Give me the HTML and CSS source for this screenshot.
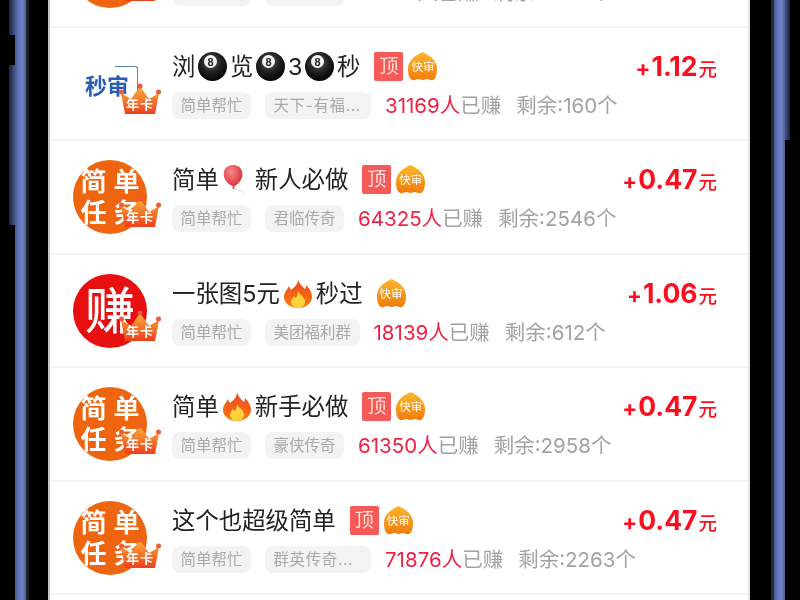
FILE: index.html
```html
<!DOCTYPE html>
<html>
<head>
    <meta charset="UTF-8">
    <title>任务列表</title>
    <link rel="stylesheet" href="styles.css">
</head>
<body>
<svg class="defs" width="0" height="0">
    <defs>
        <linearGradient id="peachFill" x1="0" y1="0" x2="0" y2="1">
            <stop offset="0" stop-color="#fdb62c"/>
            <stop offset="1" stop-color="#ef7d0c"/>
        </linearGradient>
        <linearGradient id="crownFill" x1="0" y1="0" x2="0" y2="1">
            <stop offset="0" stop-color="#fbb03a"/>
            <stop offset="1" stop-color="#ee3f1c"/>
        </linearGradient>
        <radialGradient id="ballFill" cx=".45" cy=".35" r=".7">
            <stop offset="0" stop-color="#5a5a5a"/>
            <stop offset=".55" stop-color="#1c1c1c"/>
            <stop offset="1" stop-color="#000"/>
        </radialGradient>
        <radialGradient id="balloonFill" cx=".4" cy=".3" r=".75">
            <stop offset="0" stop-color="#f98a8a"/>
            <stop offset="1" stop-color="#d9202c"/>
        </radialGradient>
        <linearGradient id="fireFill" x1="0" y1="0" x2="0" y2="1">
            <stop offset="0" stop-color="#f0451c"/>
            <stop offset="1" stop-color="#f77f12"/>
        </linearGradient>
        <symbol id="peach" viewBox="0 0 29 29">
            <path d="M14.500 0C8 3 0 8 0 17c0 5 1 9 4 11 2 1 4-1 6-1 2 0 3 1 4.500 1s3-1 4.500-1c2 0 4 2 6 1 3-2 4-6 4-11C29 8 21 3 14.500 0z" fill="url(#peachFill)"/>
        </symbol>
        <symbol id="crown" viewBox="0 0 42 32">
            <path d="M6 31L2 10l10 6L21 3l9 13 10-6-4 21z" fill="url(#crownFill)"/>
            <circle cx="2.500" cy="9" r="2.500" fill="#ee5a3a"/>
            <circle cx="21" cy="3" r="2.500" fill="#ee5a3a"/>
            <circle cx="39.500" cy="9" r="2.500" fill="#ee5a3a"/>
        </symbol>
        <symbol id="ball" viewBox="0 0 29 29">
            <circle cx="14.500" cy="14.500" r="14.500" fill="url(#ballFill)"/>
            <circle cx="12.500" cy="9.500" r="6.500" fill="#f4f4f4"/>
            <text x="12.500" y="13.500" font-size="11" font-family="Liberation Sans" font-weight="bold" text-anchor="middle" fill="#222">8</text>
        </symbol>
        <symbol id="balloon" viewBox="0 0 25 31">
            <path d="M11 0c6 0 10 4 10 10 0 6-5 11-9 13l1 2-3 0 1-2C6 21 1 16 1 10 1 4 5 0 11 0z" fill="url(#balloonFill)"/>
            <path d="M12 25c3 1 7 3 11 6" fill="none" stroke="#ddd" stroke-width="1"/>
        </symbol>
        <symbol id="fire" viewBox="0 0 28 29">
            <path d="M14 0c1 5 4 7 7 10 1-1 1-3 1-4 4 4 6 8 6 12 0 6-6 11-14 11S0 24 0 18c0-5 3-7 5-11 1 2 1 3 2 4 4-3 7-6 7-11z" fill="url(#fireFill)"/>
            <path d="M14 12c1 3 7 6 7 11 0 3-3 6-7 6s-7-3-7-6c0-3 2-4 3-6 1 1 1 2 2 2 1-2 2-4 2-7z" fill="#fdd23a"/>
        </symbol>
    </defs>
</svg>

<div class="phone">
    <div class="rail rail-left">
        <div class="keys">
            <i class="key key-top"></i>
            <i class="key key-main"></i>
        </div>
        <i class="strip"></i>
    </div>

    <ul class="list">
        <li class="row">
            <div class="avatar avatar-orange">
                <span class="word">简</span><span class="word">单</span><span class="word">任</span><span class="word">务</span>
                <div class="crown"><svg><use href="#crown"/></svg><span>年卡</span></div>
            </div>
            <div class="info">
                <div class="title-row">
                    <span class="title">简单任务</span>
                    <span class="price"><em>+</em>0.47<small>元</small></span>
                </div>
                <div class="meta">
                    <span class="tag">简单帮忙</span>
                    <span class="tag">豪侠传奇</span>
                    <span class="stat"><b>61350人</b>已赚</span>
                    <span class="stat">剩余:2958个</span>
                </div>
            </div>
        </li>

        <li class="row">
            <div class="avatar avatar-logo">
                <i class="logo-frame"></i>
                <span class="logo-text">秒审</span>
                <div class="crown"><svg><use href="#crown"/></svg><span>年卡</span></div>
            </div>
            <div class="info">
                <div class="title-row">
                    <span class="title">浏<svg class="emoji ball"><use href="#ball"/></svg>览<svg class="emoji ball"><use href="#ball"/></svg>3<svg class="emoji ball"><use href="#ball"/></svg>秒</span>
                    <span class="top-badge">顶</span>
                    <span class="fast"><svg><use href="#peach"/></svg><span>快审</span></span>
                    <span class="price"><em>+</em>1.12<small>元</small></span>
                </div>
                <div class="meta">
                    <span class="tag">简单帮忙</span>
                    <span class="tag tag-cut">天下-有福...</span>
                    <span class="stat"><b>31169人</b>已赚</span>
                    <span class="stat">剩余:160个</span>
                </div>
            </div>
        </li>

        <li class="row">
            <div class="avatar avatar-orange">
                <span class="word">简</span><span class="word">单</span><span class="word">任</span><span class="word">务</span>
                <div class="crown"><svg><use href="#crown"/></svg><span>年卡</span></div>
            </div>
            <div class="info">
                <div class="title-row">
                    <span class="title">简单<svg class="emoji balloon"><use href="#balloon"/></svg>新人必做</span>
                    <span class="top-badge">顶</span>
                    <span class="fast"><svg><use href="#peach"/></svg><span>快审</span></span>
                    <span class="price"><em>+</em>0.47<small>元</small></span>
                </div>
                <div class="meta">
                    <span class="tag">简单帮忙</span>
                    <span class="tag">君临传奇</span>
                    <span class="stat"><b>64325人</b>已赚</span>
                    <span class="stat">剩余:2546个</span>
                </div>
            </div>
        </li>

        <li class="row">
            <div class="avatar avatar-red">
                <span class="big-word">赚</span>
                <div class="crown"><svg><use href="#crown"/></svg><span>年卡</span></div>
            </div>
            <div class="info">
                <div class="title-row">
                    <span class="title">一张图5元<svg class="emoji fire"><use href="#fire"/></svg>秒过</span>
                    <span class="fast"><svg><use href="#peach"/></svg><span>快审</span></span>
                    <span class="price"><em>+</em>1.06<small>元</small></span>
                </div>
                <div class="meta">
                    <span class="tag">简单帮忙</span>
                    <span class="tag">美团福利群</span>
                    <span class="stat"><b>18139人</b>已赚</span>
                    <span class="stat">剩余:612个</span>
                </div>
            </div>
        </li>

        <li class="row">
            <div class="avatar avatar-orange">
                <span class="word">简</span><span class="word">单</span><span class="word">任</span><span class="word">务</span>
                <div class="crown"><svg><use href="#crown"/></svg><span>年卡</span></div>
            </div>
            <div class="info">
                <div class="title-row">
                    <span class="title">简单<svg class="emoji fire"><use href="#fire"/></svg>新手必做</span>
                    <span class="top-badge">顶</span>
                    <span class="fast"><svg><use href="#peach"/></svg><span>快审</span></span>
                    <span class="price"><em>+</em>0.47<small>元</small></span>
                </div>
                <div class="meta">
                    <span class="tag">简单帮忙</span>
                    <span class="tag">豪侠传奇</span>
                    <span class="stat"><b>61350人</b>已赚</span>
                    <span class="stat">剩余:2958个</span>
                </div>
            </div>
        </li>

        <li class="row">
            <div class="avatar avatar-orange">
                <span class="word">简</span><span class="word">单</span><span class="word">任</span><span class="word">务</span>
                <div class="crown"><svg><use href="#crown"/></svg><span>年卡</span></div>
            </div>
            <div class="info">
                <div class="title-row">
                    <span class="title">这个也超级简单</span>
                    <span class="top-badge">顶</span>
                    <span class="fast"><svg><use href="#peach"/></svg><span>快审</span></span>
                    <span class="price"><em>+</em>0.47<small>元</small></span>
                </div>
                <div class="meta">
                    <span class="tag">简单帮忙</span>
                    <span class="tag tag-cut">群英传奇...</span>
                    <span class="stat"><b>71876人</b>已赚</span>
                    <span class="stat">剩余:2263个</span>
                </div>
            </div>
        </li>
    </ul>

    <div class="rail rail-right">
        <i class="strip"></i>
        <i class="key key-side"></i>
    </div>
</div>
</body>
</html>
```

FILE: styles.css
```css
* {
    margin: 0;
    padding: 0;
}

ul, li {
    list-style: none;
}

html, body {
    width: 100%;
    height: 100%;
    overflow: hidden;
    background: #000;
}

body {
    font-family: "Inter", "Noto Sans CJK SC", sans-serif;
}

.defs {
    display: block;
    height: 0;
}

.phone {
    display: flex;
    height: 600px;
    filter: blur(.5px);
}

/* 手机边框 */
.rail {
    display: flex;
    flex: none;
    box-sizing: border-box;
    height: 600px;
    overflow: hidden;
}

.rail-left {
    width: 48px;
    padding-left: 9px;
}

.rail-right {
    width: 50px;
    padding-left: 24px;
}

.keys {
    display: flex;
    flex-direction: column;
    flex: none;
    width: 6px;
}

.key {
    display: block;
    flex: none;
    width: 6px;
    background: linear-gradient(90deg, #1a2036, #46568e);
}

.key-top {
    height: 35px;
    margin-bottom: 30px;
}

.key-main {
    height: 160px;
}

.key-side {
    height: 140px;
    width: 5px;
    background: linear-gradient(90deg, #46568e, #1a2036);
}

.strip {
    display: block;
    flex: none;
    width: 11px;
    height: 600px;
    border-right: 3px solid #222;
    background: linear-gradient(90deg, #4a5b98, #6378bc 40%, #6c80c2 70%, #4c5c94);
}

.rail-right .strip {
    border-right: none;
    border-left: 3px solid #2a2a2a;
    margin-left: -3px;
}

/* 列表 */
.list {
    flex: none;
    box-sizing: border-box;
    width: 702px;
    height: 600px;
    overflow: hidden;
    background: #fff;
    border-left: 2px solid #c8c8c8;
    border-right: 2px solid #e4e4e4;
}

.row {
    display: flex;
    align-items: flex-start;
    box-sizing: border-box;
    height: 113.4px;
    padding: 19px 31px 0 23px;
    border-bottom: 2px solid #f4f4f4;
}

.row:first-child {
    margin-top: -85.4px;
}

.avatar {
    position: relative;
    flex: none;
    display: flex;
    flex-wrap: wrap;
    align-content: center;
    justify-content: center;
    width: 74px;
    height: 74px;
    margin-right: 25px;
    border-radius: 50%;
    color: #fff;
}

.avatar-orange {
    background: #ef650f;
}

.avatar-red {
    background: #e70f10;
}

.avatar-logo {
    background: #fff;
}

.word {
    width: 33px;
    height: 31px;
    font-size: 26px;
    font-weight: 700;
    line-height: 31px;
    text-align: center;
}

.big-word {
    font-size: 50px;
    font-weight: 500;
    line-height: 74px;
}

.logo-text {
    position: absolute;
    left: 12px;
    top: 26px;
    color: #2c5db2;
    font-size: 22px;
    font-weight: 700;
    line-height: 26px;
    white-space: nowrap;
}

.logo-frame {
    position: absolute;
    left: 42px;
    top: 19px;
    width: 22px;
    height: 30px;
    border-top: 1px solid #5a7cc0;
    border-right: 1px solid #5a7cc0;
    border-radius: 0 3px 3px 0;
}

.crown {
    position: absolute;
    left: 46px;
    top: 36px;
    width: 42px;
    height: 32px;
}

.crown svg {
    display: block;
    width: 42px;
    height: 32px;
}

.crown span {
    position: absolute;
    left: 0;
    right: 0;
    top: 12px;
    color: #fff;
    font-size: 13px;
    font-weight: 700;
    line-height: 18px;
    letter-spacing: 1px;
    text-align: center;
}

.info {
    flex: 1;
    min-width: 0;
    margin-top: 5px;
}

.title-row {
    display: flex;
    align-items: center;
    height: 29px;
}

.title {
    display: flex;
    align-items: center;
    color: #222;
    font-size: 23.4px;
    line-height: 29px;
    white-space: nowrap;
}

.emoji {
    display: block;
    flex: none;
    height: 29px;
}

.ball {
    width: 29px;
    margin: 0 2.800px;
}

.balloon {
    width: 25px;
    margin: 0 8px 0 3px;
}

.fire {
    width: 28px;
    margin: 0 4px;
}

.top-badge {
    flex: none;
    width: 29px;
    height: 29px;
    margin-left: 14px;
    border-radius: 2px;
    background: #f65a58;
    color: #fde3dc;
    font-size: 19px;
    line-height: 29px;
    text-align: center;
}

.fast {
    position: relative;
    flex: none;
    width: 29px;
    height: 29px;
    margin-left: 14px;
}

.top-badge + .fast {
    margin-left: 5px;
}

.fast svg {
    display: block;
    width: 29px;
    height: 29px;
}

.fast span {
    position: absolute;
    left: 0;
    right: 0;
    top: 8px;
    color: #fff;
    font-size: 11.500px;
    line-height: 14px;
    text-align: center;
}

.price {
    display: flex;
    align-items: baseline;
    margin-top: 3px;
    margin-left: auto;
    color: #fb0f1f;
    font-size: 26.500px;
    font-weight: 700;
    line-height: 29px;
}

.price em {
    margin-right: 1px;
    font-size: 22px;
    font-style: normal;
}

.price small {
    margin-left: 1px;
    font-size: 18.500px;
    font-weight: 500;
}

.meta {
    display: flex;
    align-items: center;
    margin-top: 11px;
}

.tag {
    flex: none;
    box-sizing: border-box;
    height: 27px;
    margin-right: 14px;
    padding: 0 8.500px;
    border-radius: 8px;
    background: #f3f3f3;
    color: #a9a9a9;
    font-size: 15.500px;
    line-height: 27px;
    white-space: nowrap;
}

.tag-cut {
    width: 106px;
    letter-spacing: .6px;
}

.stat {
    margin-right: 15px;
    color: #a2a2a2;
    font-size: 20.500px;
    line-height: 27px;
    white-space: nowrap;
}

.stat b {
    color: #ef2244;
    font-weight: 400;
}
```
